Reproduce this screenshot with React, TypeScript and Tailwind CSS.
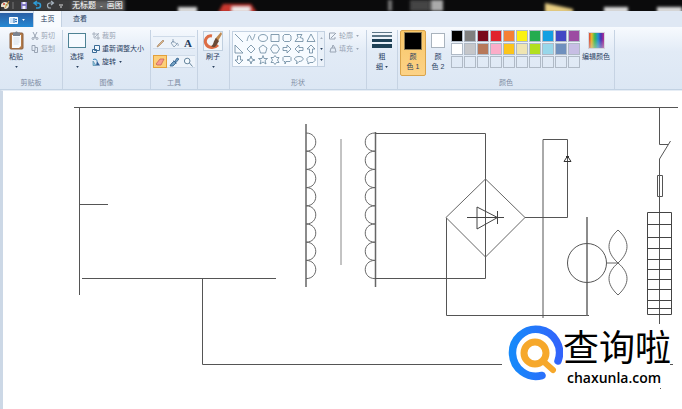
import type { ReactNode } from "react";

function Arrow({ className = "" }: { className?: string }) {
  return (
    <svg viewBox="0 0 4 3" className={`h-[2px] w-[3px] shrink-0 ${className}`} aria-hidden="true">
      <path d="M0 0h4L2 3z" fill="currentColor" />
    </svg>
  );
}

function Group({ label, className = "", children }: { label?: string; className?: string; children: ReactNode }) {
  return (
    <section className={`relative flex shrink-0 flex-col border-r border-[#c6d3e3] ${className}`}>
      <div className="flex h-[47px] items-start">{children}</div>
      <div className="h-3 text-center leading-3 text-[#7e8ca3]">{label}</div>
    </section>
  );
}

function BigButton({ label, icon, arrow, className = "" }: { label: string; icon: ReactNode; arrow?: boolean; className?: string }) {
  return (
    <button type="button" className={`flex shrink-0 flex-col items-center ${className}`}>
      <span className="flex h-[21px] items-center justify-center">{icon}</span>
      <span className="mt-px h-[10px] leading-[10px] whitespace-nowrap">{label}</span>
      {arrow && <Arrow className="mt-1" />}
    </button>
  );
}

function SmallButton({ label, icon, disabled, arrow }: { label: string; icon: ReactNode; disabled?: boolean; arrow?: boolean }) {
  return (
    <button type="button" disabled={disabled} className="flex h-3 items-center gap-[2px] leading-3 whitespace-nowrap disabled:text-[#9aa5b4]">
      <svg viewBox="0 0 8 8" className="size-2 shrink-0" fill="none" stroke="currentColor" aria-hidden="true">
        {icon}
      </svg>
      <span>{label}</span>
      {arrow && <Arrow className="ml-px" />}
    </button>
  );
}

function TitleBar() {
  return (
    <header className="relative flex h-[11px] items-center overflow-hidden bg-[#0b0b0c] text-white">
      <div className="absolute inset-0" aria-hidden="true">
        <svg width="682" height="11" className="block">
          <defs>
            <filter id="glass" x="-20%" y="-100%" width="140%" height="300%">
              <feGaussianBlur stdDeviation="1.5" />
            </filter>
          </defs>
          <g filter="url(#glass)">
            <rect x="0" y="-2" width="125" height="14" fill="#6c6c6c" opacity=".5" />
            <rect x="72" y="1" width="52" height="9" fill="#888" opacity=".5" />
            <rect x="178" y="7" width="19" height="6" fill="#ddd" />
            <path d="M218 13l5-9h28l6 9z" fill="#c9372e" />
            <rect x="232" y="7" width="18" height="5" fill="#eee" />
            <rect x="388" y="0" width="4" height="11" fill="#777" />
            <rect x="410" y="0" width="20" height="11" fill="#444" />
            <rect x="431" y="0" width="12" height="11" fill="#aaa" />
            <path d="M545 3l28 6v4h-28z" fill="#e8ce82" />
            <rect x="604" y="7" width="24" height="6" fill="#ddd" />
            <rect x="657" y="7" width="25" height="6" fill="#ddd" />
          </g>
        </svg>
      </div>
      <div className="relative flex items-center">
        <svg viewBox="0 0 64 11" className="h-[11px] w-16" aria-hidden="true">
          <path d="M1 6a4 3.500 0 1 1 4 3c-1 0 0-2-2-2s-2 0-2-1z" fill="#e8e0cf" />
          <circle cx="4" cy="4" r="1" fill="#d04432" />
          <circle cx="6.500" cy="5" r="1" fill="#4e9b46" />
          <path d="M5 8l4-7" stroke="#d9983c" strokeWidth="1" />
          <path d="M13 2v7" stroke="#777" />
          <path d="M21 2h6v7h-6z" fill="#8279c4" />
          <path d="M22.500 2h3v2h-3zM22.500 6h3v3h-3z" fill="#f1f1fa" />
          <path d="M36 8h2a2.500 2.500 0 0 0 0-5h-3M37 1l-3 2 3 2.500" fill="none" stroke="#2e9bd5" strokeWidth="1.500" />
          <path d="M51 8h-1a2.500 2.500 0 0 1 0-5h3M51 1l2.500 2L51 5" fill="none" stroke="#a5b2bd" strokeWidth="1.200" />
          <path d="M59 5h4M60 7h2" stroke="#ddd" />
        </svg>
        <h1 className="ml-2 flex gap-1 text-[8px] leading-[11px]">
          <span>无标题</span><span>-</span><span>画图</span>
        </h1>
      </div>
    </header>
  );
}

function Tabs() {
  return (
    <nav className="flex h-4 items-stretch bg-[#dfe8f4]">
      <button type="button" aria-label="文件" className="mt-[2px] flex w-[33px] items-center justify-center gap-1 bg-gradient-to-b from-[#2a5ea4] to-[#2389d4] text-white">
        <svg viewBox="0 0 9 7" className="h-[7px] w-[9px]" aria-hidden="true">
          <path d="M.5.5h8v6h-8z" fill="#cfe4f8" stroke="#fff" />
          <path d="M5 1v5M6 2.500h2M6 4.500h2" stroke="#3978b8" />
        </svg>
        <Arrow />
      </button>
      <button type="button" aria-current="page" className="flex w-[29px] items-center justify-center border-x border-[#c3d1e2] bg-[#f8fbfe]">
        主页
      </button>
      <button type="button" className="flex w-9 items-center justify-center">查看</button>
    </nav>
  );
}

const shapes = [
  "M1 1l8 8",
  "M1 8c2-8 3-6 4-3s2 3 4-4",
  "M5 1.500c6 0 6 7 0 7s-6-7 0-7z",
  "M1 1.500h8v7H1z",
  "M2.500 1.500h5L9 3v4L7.500 8.500h-5L1 7V3z",
  "M1 8.500l3-4-1-3h5l-2 3 3 1v3z",
  "M5 1l4 7.500H1z",
  "M1 1v8h8z",
  "M5 1l4 4-4 4-4-4z",
  "M5 1l4 3-1.500 5h-5L1 4z",
  "M3 1h4l2.500 4L7 9H3L.5 5z",
  "M1 3.500h4V1l4 4-4 4V6.500H1z",
  "M9 3.500H5V1L1 5l4 4V6.500h4z",
  "M3.500 9V5H1l4-4 4 4H6.500v4z",
  "M3.500 1v4H1l4 4 4-4H6.500V1z",
  "M5 1l1 3 3 1-3 1-1 3-1-3-3-1 3-1z",
  "M5 .5l1 3h3.500l-2.500 2 1 3.500-3-2-3 2 1-3.500-2.500-2H4z",
  "M5 .5l1.500 2H9L7.500 5 9 7.500H6.500L5 9.500l-1.500-2H1L2.500 5 1 2.500h2.500z",
  "M2 1.500h6l1 1v3l-1 1H4L3 9V6.500H2l-1-1v-3z",
  "M5 1.500c6 0 5 5 0 5L2.500 9 3 6C-1 5 0 1.500 5 1.500z",
  "M3 1.500h4l2 2v2l-2 2H4L2 9V7L1 5.500v-2z",
];

function ShapeGallery() {
  return (
    <div className="flex h-9 w-[93px] border border-[#c4d2e2] bg-[#f7fbff]">
      <div className="grid flex-1 grid-cols-7 grid-rows-3">
        {shapes.map((d, i) => (
          <button type="button" key={i} aria-label={`形状 ${i + 1}`} className="flex items-center justify-center">
            <svg viewBox="0 0 10 10" className="size-[10px]" fill="none" stroke="#67879d" strokeWidth=".8">
              <path d={d} />
            </svg>
          </button>
        ))}
      </div>
      <div className="flex w-[7px] flex-col items-center justify-around border-l border-[#c4d2e2] bg-[#eaf1f9]">
        <Arrow className="rotate-180 text-[#a5afbc]" />
        <Arrow />
        <Arrow />
      </div>
    </div>
  );
}

const palette = [
  ["黑色", "#000000"], ["灰色", "#7f7f7f"], ["深红", "#7a0a1c"], ["红色", "#e0242c"], ["橙色", "#f58034"],
  ["黄色", "#fcf112"], ["绿色", "#25ac4f"], ["蓝色", "#149fe2"], ["靛蓝", "#4247c4"], ["紫色", "#9c4ba2"],
  ["白色", "#ffffff"], ["浅灰", "#c5c6c9"], ["褐色", "#b7785a"], ["玫瑰", "#fbadc8"], ["金色", "#fcc51b"],
  ["浅黄", "#efe5b2"], ["酸橙", "#b2df20"], ["浅蓝", "#98d7ea"], ["蓝灰", "#6f90be"], ["淡紫", "#c7bee4"],
];

function Ribbon() {
  return (
    <div className="flex overflow-hidden border-b border-[#c2d2e3] bg-gradient-to-b from-[#f7fafe] via-[#e2ebf6] via-40% to-[#dce7f4] pt-[3px]">
      <Group label="剪贴板" className="w-[63px]">
        <BigButton label="粘贴" arrow className="ml-1.5 w-5" icon={
          <svg viewBox="0 0 15 19" className="h-[19px] w-[15px]" aria-hidden="true">
            <rect x="1" y="2" width="13" height="16" rx="1" fill="#b57c49" stroke="#8b6041" />
            <path d="M3 4h9v11l-2 2H3z" fill="#f8fbfe" />
            <path d="M4.500 7h6M4.500 9h6M4.500 11h6M4.500 13h5" stroke="#c7d2de" strokeWidth=".7" />
            <path d="M4 1.500h2l1-1h1l1 1h2V5H4z" fill="#7c8490" />
          </svg>} />
        <div className="ml-[5px] flex flex-col gap-px">
          <SmallButton disabled label="剪切" icon={<path d="M2 0l3 6M6 0L3 6M3 6.500a1 1 0 1 1-2 0 1 1 0 0 1 2 0M7 6.500a1 1 0 1 1-2 0 1 1 0 0 1 2 0" />} />
          <SmallButton disabled label="复制" icon={<path d="M1 .5h3v5H1zM4 2.500h2.500v5H3.500v-2" />} />
        </div>
      </Group>

      <Group label="图像" className="w-[88px]">
        <BigButton label="选择" arrow className="ml-1 w-5" icon={
          <svg viewBox="0 0 18 15" className="h-[15px] w-[18px]" aria-hidden="true">
            <rect x=".5" y=".5" width="17" height="14" fill="#f5faff" stroke="#4d8294" />
          </svg>} />
        <div className="ml-[5px] flex flex-col gap-px">
          <SmallButton disabled label="裁剪" icon={<path d="M2 0v6h6M0 2h6v6M3 5l4-4" strokeWidth=".8" />} />
          <SmallButton label="重新调整大小" icon={<path d="M2.500.5h5v5h-5zM.5 4.500h4v3h-4z" stroke="#3a6b96" fill="#eef6fd" />} />
          <SmallButton label="旋转" arrow icon={<><path d="M1 7.500V3l3 4.500z" fill="#8bc3df" stroke="#558cab" strokeWidth=".7" /><path d="M4 7.500h4L5 3z" fill="#2c5c92" stroke="none" /><path d="M1 1.500c3-1 4 0 4 2" stroke="#3786bd" /></>} />
        </div>
      </Group>

      <Group label="工具" className="w-[47px]">
        <div className="mt-1.5 ml-[2px] grid grid-cols-3 gap-y-[6px]">
          {[
            ["铅笔", <path key="p" d="M2 9l1-2 5-5 1 1-5 5z" fill="#dbb78a" stroke="#a88765" strokeWidth=".7" />],
            ["填充", <path key="f" d="M4 3l4 3-3 3-3-4zM4 5V1M8 5c2 1 1 2 1 3" fill="#edf3f9" stroke="#7c93ab" strokeWidth=".8" />],
            ["文本", null],
            ["橡皮擦", <path key="e" d="M1 7l4-5h4L6 8H2z" fill="#f69b91" stroke="#c35b55" strokeWidth=".7" />],
            ["取色器", <path key="c" d="M1 9l1-2 3-3 2 2-3 3zM4.500 3.500l3 3M6 4l2-3 2 1-3 3.500z" fill="#719fc1" stroke="#31608e" strokeWidth=".8" />],
            ["放大镜", <path key="z" d="M7 4a2.800 2.800 0 1 1-5.600 0A2.800 2.800 0 0 1 7 4zM6.500 6L9.500 9.500" fill="#f5fbff" stroke="#65849c" strokeWidth="1" />],
          ].map(([name, icon]) => (
            <button type="button" key={name as string} aria-label={name as string} aria-pressed={name === "橡皮擦"} className="flex h-[13px] w-[14px] items-center justify-center border-y border-[#cfdbe9] bg-[#edf3fa] aria-pressed:border aria-pressed:border-[#e2a03b] aria-pressed:bg-[#fdcf79]">
              {icon ? <svg viewBox="0 0 10 10" className="size-[10px]">{icon}</svg> : <span className="font-['Liberation_Serif',serif] text-[11px] leading-3 font-bold text-[#20395a]">A</span>}
            </button>
          ))}
        </div>
      </Group>

      <Group className="w-8">
        <BigButton label="刷子" arrow className="ml-[5px] w-5" icon={
          <svg viewBox="0 0 20 20" className="size-5" aria-hidden="true">
            <rect x=".5" y=".5" width="19" height="19" fill="#f1f6fb" stroke="#c0cfdf" />
            <path d="M9 5C4 4 1 9 3 13s8 5 12 1" fill="none" stroke="#dd6d45" strokeWidth="3" />
            <path d="M18 1l-6 7 3 2 4-7z" fill="#c08a50" />
            <path d="M13 7l3 3-3 5c-2 2-4 1-5 0 3-1 2-5 5-8z" fill="#6a4a38" />
          </svg>} />
      </Group>

      <Group label="形状" className="w-[137px]">
        <div className="mt-px ml-[2px]"><ShapeGallery /></div>
        <div className="ml-1 flex flex-col gap-px">
          <SmallButton disabled arrow label="轮廓" icon={<path d="M6 1H.5v6H6V5M2 6l5-5" />} />
          <SmallButton disabled arrow label="填充" icon={<path d="M2 3h4l1 4H1zM3 3l1-3 2 3" />} />
        </div>
      </Group>

      <Group className="w-[31px]">
        <button type="button" className="ml-[5px] flex w-5 flex-col items-center">
          <svg viewBox="0 0 20 18" className="h-[18px] w-5" fill="#1e4055" aria-hidden="true">
            <path d="M0 2h20v1H0z" opacity=".7" /><path d="M0 5h20v2H0z" opacity=".7" /><path d="M0 9h20v3H0zM0 14h20v4H0z" />
          </svg>
          <span className="mt-1 leading-[10px]">粗</span>
          <span className="flex items-center gap-[2px] leading-[10px]">细<Arrow /></span>
        </button>
      </Group>

      <Group label="颜色" className="w-[217px]">
        <button type="button" aria-pressed="true" className="ml-[2px] flex h-[46px] w-[26px] flex-col items-center rounded-[2px] border border-[#d9a44c] bg-gradient-to-b from-[#f9c768] to-[#fcd286] pt-px">
          <span className="size-[18px] border border-[#8c7b55] bg-black" />
          <span className="mt-[2px] leading-[10px]">颜</span>
          <span className="leading-[10px]">色 1</span>
        </button>
        <button type="button" className="flex h-[46px] w-6 flex-col items-center pt-[2px]">
          <span className="my-px h-[15px] w-[14px] border border-[#a9b3bd] bg-white" />
          <span className="mt-[3px] leading-[10px]">颜</span>
          <span className="leading-[10px]">色 2</span>
        </button>
        <div className="ml-px grid grid-cols-10 gap-px">
          {Array.from({ length: 30 }, (_, i) => (
            <button type="button" key={i} aria-label={palette[i]?.[0] ?? "自定义颜色"} className="size-3 border border-[#b0bac6]">
              <span className="block size-full" style={{ backgroundColor: palette[i]?.[1] }} />
            </button>
          ))}
        </div>
        <BigButton label="编辑颜色" className="ml-[2px] w-7" icon={
          <svg viewBox="0 0 17 17" className="size-[17px]" aria-hidden="true">
            <defs>
              <linearGradient id="spectrum">
                <stop offset="0" stopColor="#d92c3c" /><stop offset=".2" stopColor="#e8b92a" /><stop offset=".4" stopColor="#35b957" />
                <stop offset=".6" stopColor="#2090d5" /><stop offset=".78" stopColor="#4630b4" /><stop offset="1" stopColor="#c92a88" />
              </linearGradient>
              <linearGradient id="fade" x2="0" y2="1"><stop offset=".4" stopColor="#ccc" stopOpacity="0" /><stop offset="1" stopColor="#ccc" stopOpacity=".5" /></linearGradient>
            </defs>
            <path d="M.5.5h16v16H.5z" fill="url(#spectrum)" stroke="#d3d5dd" /><path d="M1 1h15v15H1z" fill="url(#fade)" />
          </svg>} />
      </Group>
    </div>
  );
}

const turns = Array.from({ length: 8 }, (_, i) => 133 + i * 18.2);

function Circuit() {
  return (
    <svg width="682" height="318" viewBox="0 91 682 318" className="block" fill="none" stroke="#555" role="img" aria-label="电路图">
      <path d="M74 107.500H678M79.500 107V295M79 204.500H108M82 278.500H276M202.500 278V364.500H502M670 364.500h3M660 388.500h1" />
      <path d="M306 124V287M375.500 132V287" stroke="#666" strokeWidth="1.500" />
      <path d="M341 139V265" stroke="#888" />
      {turns.map((y) => (
        <g key={y} stroke="#666">
          <path d={`M306 ${y}c13 0 13 18.200 0 18.200`} />
          <path d={`M375 ${y}c-13 0-13 18.200 0 18.200`} />
        </g>
      ))}
      <path d="M375 133.500H485.500V278.500H375M446.500 218V315.500H589M525 217.500H567.500V139.500H543V318" />
      <path d="M485.500 179L525 217.500 485.500 257 446 217.500z" stroke="#666" />
      <path d="M467 217.500H504M477 207V229L497.500 217.500zM497.500 211V224" stroke="#444" />
      <path d="M567.500 156l-3.500 5.500h7z" stroke="#333" />
      <path d="M566 157h3" stroke="#333" strokeWidth="2" />
      <path d="M587 217V316" strokeWidth="1.500" stroke="#666" />
      <circle cx="587" cy="263" r="19.500" />
      <path d="M606 263H618M618 230C606 241 606 252 618 263 630 252 630 241 618 230zM618 263C606 273 606 284 618 295 630 284 630 273 618 263z" stroke="#666" />
      <path d="M659.500 107V144.500H668M670.500 141L659.500 159V324M657.500 175.500h5v21h-5z" />
      <path d="M647.500 212.500h24v102h-24zM647.500 224.500h24M647.500 237.500h24M647.500 248.500h24M647.500 259.500h24M647.500 269.500h24M647.500 279.500h24M647.500 289.500h24M647.500 300.500h24M647.500 308.500h24" stroke="#444" />
    </svg>
  );
}

function Watermark() {
  return (
    <div className="absolute top-[234px] left-[504px] flex">
      <svg viewBox="0 0 56 58" className="h-[58px] w-14" fill="none" strokeLinecap="round" aria-hidden="true">
        <defs><linearGradient id="ring"><stop offset="0" stopColor="#1689fa" /><stop offset="1" stopColor="#3264fb" /></linearGradient></defs>
        <path d="M51 36A23.500 23.500 0 1 0 35 50.500" stroke="url(#ring)" strokeWidth="7.500" />
        <circle cx="28" cy="28" r="11" stroke="#f6a82b" strokeWidth="7" />
        <path d="M36 36l10 9" stroke="#f6a82b" strokeWidth="6" />
      </svg>
      <div className="flex flex-col text-black">
        <span className="h-[43px] text-[36px] leading-[47px] whitespace-nowrap">查询啦</span>
        <span className="ml-1 font-['Open_Sans',sans-serif] text-[14px] leading-5 font-semibold whitespace-nowrap">chaxunla.com</span>
      </div>
    </div>
  );
}

export default function App() {
  return (
    <div lang="zh-CN" className="flex min-h-screen flex-col overflow-hidden bg-white font-['Liberation_Sans','Noto_Sans_CJK_SC',sans-serif] text-[7px] text-[#29405f]">
      <TitleBar />
      <Tabs />
      <Ribbon />
      <main className="relative flex-1 overflow-hidden border-t border-l-[3px] border-t-[#e6edf5] border-l-[#ccd8e6]">
        <div className="-ml-[3px]"><Circuit /></div>
        <Watermark />
      </main>
    </div>
  );
}
